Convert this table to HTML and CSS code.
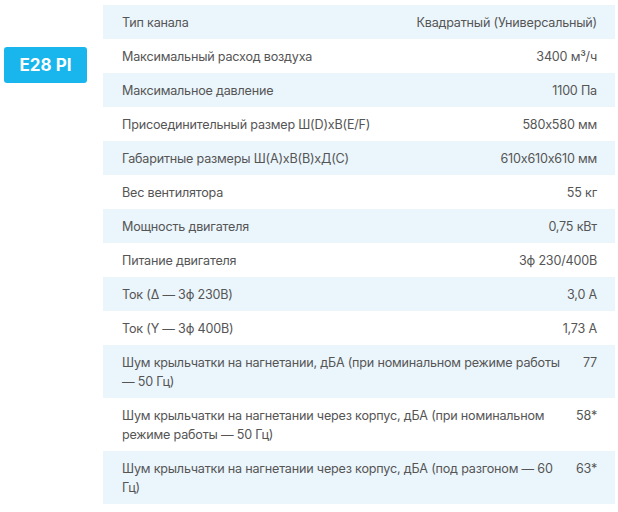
FILE: index.html
```html
<!DOCTYPE html>
<html lang="ru">
<head>
<meta charset="utf-8">
<link rel="stylesheet" href="styles.css">
</head>
<body>
<div class="wrap">
  <div class="side"><span class="badge">E28 PI</span></div>
  <div class="specs">
    <div class="row shade"><span class="label">Тип канала</span><span class="value">Квадратный (Универсальный)</span></div>
    <div class="row"><span class="label">Максимальный расход воздуха</span><span class="value">3400 м³/ч</span></div>
    <div class="row shade"><span class="label">Максимальное давление</span><span class="value">1100 Па</span></div>
    <div class="row"><span class="label">Присоединительный размер Ш(D)хВ(E/F)</span><span class="value">580х580 мм</span></div>
    <div class="row shade"><span class="label">Габаритные размеры Ш(А)хВ(В)хД(С)</span><span class="value">610х610х610 мм</span></div>
    <div class="row"><span class="label">Вес вентилятора</span><span class="value">55 кг</span></div>
    <div class="row shade"><span class="label">Мощность двигателя</span><span class="value">0,75 кВт</span></div>
    <div class="row"><span class="label">Питание двигателя</span><span class="value">3ф 230/400В</span></div>
    <div class="row shade"><span class="label">Ток (Δ — 3ф 230В)</span><span class="value">3,0 А</span></div>
    <div class="row"><span class="label">Ток (Y — 3ф 400В)</span><span class="value">1,73 А</span></div>
    <div class="row shade"><span class="label">Шум крыльчатки на нагнетании, дБА (при номинальном режиме работы — 50 Гц)</span><span class="value">77</span></div>
    <div class="row"><span class="label">Шум крыльчатки на нагнетании через корпус, дБА (при номинальном режиме работы — 50 Гц)</span><span class="value">58*</span></div>
    <div class="row shade"><span class="label">Шум крыльчатки на нагнетании через корпус, дБА (под разгоном — 60 Гц)</span><span class="value">63*</span></div>
  </div>
</div>
</body>
</html>
```

FILE: styles.css
```css
html, body {
  margin: 0;
  padding: 0;
  background: #ffffff;
}
body {
  font-family: Inter, "Noto Sans", "Liberation Sans", sans-serif;
  color: #555555;
}
.wrap {
  display: flex;
  align-items: flex-start;
  padding: 5px 3px 0 4px;
}
.side {
  width: 99px;
  flex: none;
  padding-top: 42px;
}
.badge {
  display: inline-flex;
  align-items: center;
  justify-content: center;
  width: 83px;
  height: 36px;
  background: #18b6ec;
  color: #ffffff;
  border-radius: 3px;
  font-weight: 700;
  font-size: 17px;
}
.specs {
  flex: 1;
  display: flex;
  flex-direction: column;
}
.row {
  display: flex;
  justify-content: space-between;
  align-items: flex-start;
  gap: 22px;
  min-height: 34px;
  box-sizing: border-box;
  padding: 7.5px 18px 6.5px 19px;
  font-size: 12.6px;
  letter-spacing: -0.2px;
  line-height: 19.5px;
}
.row.shade {
  background: #ebf6fc;
}
.value {
  flex: none;
  text-align: right;
}
```
